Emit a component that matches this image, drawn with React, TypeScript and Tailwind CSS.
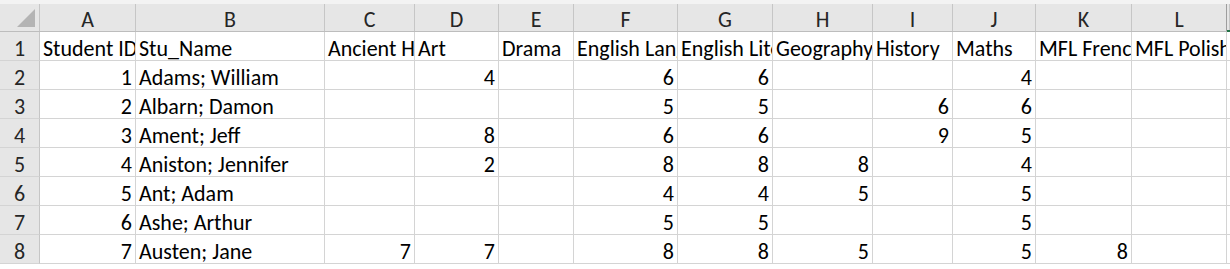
const cols = ["A", "B", "C", "D", "E", "F", "G", "H", "I", "J", "K", "L", ""];

const header = [
  "Student ID",
  "Stu_Name",
  "Ancient History",
  "Art",
  "Drama",
  "English Language",
  "English Literature",
  "Geography",
  "History",
  "Maths",
  "MFL French",
  "MFL Polish",
  "",
];

type Cell = string | number | null;

const rows: Cell[][] = [
  [1, "Adams; William", null, 4, null, 6, 6, null, null, 4, null, null],
  [2, "Albarn; Damon", null, null, null, 5, 5, null, 6, 6, null, null],
  [3, "Ament; Jeff", null, 8, null, 6, 6, null, 9, 5, null, null],
  [4, "Aniston; Jennifer", null, 2, null, 8, 8, 8, null, 4, null, null],
  [5, "Ant; Adam", null, null, null, 4, 4, 5, null, 5, null, null],
  [6, "Ashe; Arthur", null, null, null, 5, 5, null, null, 5, null, null],
  [7, "Austen; Jane", 7, 7, null, 8, 8, 5, null, 5, 8, null],
];

const grid =
  "grid grid-cols-[40px_96px_189px_90px_84px_75px_104px_95px_100px_80px_83px_96px_95px_1fr]";

export default function App() {
  return (
    <div
      className="h-[269px] w-[1230px] overflow-hidden bg-white text-[22px] leading-none text-black"
      style={{ fontFamily: "Calibri, Carlito, Lato, 'Liberation Sans', sans-serif" }}
    >
      <div className="h-[4px] bg-[#f3f3f3]" />
      {/* column letters */}
      <div className={`${grid} h-[28px] border-b border-[#bdbdbd] bg-[#e6e6e6] text-[#262626]`}>
        <div className="relative border-r border-[#c6c6c6]">
          <div className="absolute right-[4px] bottom-[4px] h-0 w-0 border-b-[18px] border-l-[18px] border-b-[#b4b4b4] border-l-transparent" />
        </div>
        {cols.map((c, i) => (
          <div
            key={i}
            className={`relative flex items-center justify-center border-r pt-[4px] ${i === 11 ? "border-[#9e9e9e]" : "border-[#c6c6c6]"}`}
          >
            {c}
            {i === 12 && <div className="absolute bottom-[-1px] left-0 h-[2px] w-[3px] bg-[#217346]" />}
          </div>
        ))}
      </div>
      {[header, ...rows].map((row, r) => (
        <div key={r} className={`${grid} h-[29px]`}>
          <div className="flex items-center justify-center border-r border-b border-r-[#c6c6c6] border-b-[#d4d4d4] bg-[#e6e6e6] pt-[6px] text-[#262626]">
            {r + 1}
          </div>
          {cols.map((_, i) => {
            const v = row[i];
            const num = typeof v === "number";
            return (
              <div
                key={i}
                className={`flex items-center overflow-hidden whitespace-nowrap border-r border-b border-[#d4d4d4] pt-[6px] ${num ? "justify-end pr-[3px]" : "pl-[3px]"}`}
              >
                {v ?? ""}
              </div>
            );
          })}
        </div>
      ))}
    </div>
  );
}
